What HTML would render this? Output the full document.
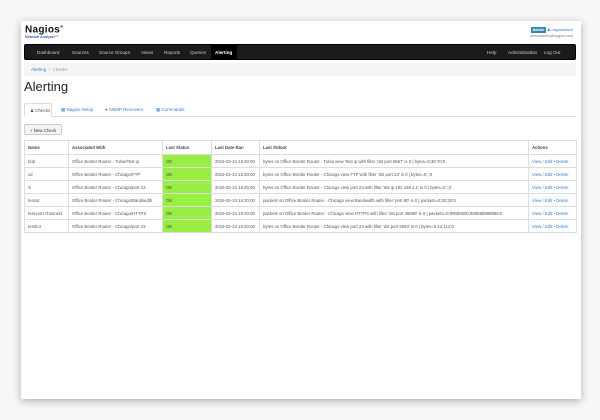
<!DOCTYPE html>
<html><head><meta charset="utf-8"><style>
*{margin:0;padding:0;box-sizing:border-box}
body{width:600px;height:420px;background:#f7f7f7;font-family:"Liberation Sans",sans-serif;position:relative;overflow:hidden;color:#333}
.frame{position:absolute;left:21px;top:21px;width:560px;height:378px;background:#fff;box-shadow:0 2px 8px rgba(0,0,0,.3)}
.abs{position:absolute;white-space:nowrap}
.nav{left:3px;top:23px;width:552px;height:16px;background:#1b1b1b;border:1px solid #000;border-radius:2px;font-size:4.6px;color:#ccc}
.nav span{position:absolute;top:5px;white-space:nowrap}
.bc{left:3px;top:42px;width:552px;height:13px;background:#f5f5f5;font-size:4.5px;color:#999;padding:4px 0 0 7px}
.bc a{color:#3a7dc9}
h1{position:absolute;left:3px;top:58px;font-size:13px;font-weight:normal;color:#222}
.tabline{left:3px;top:95px;width:552px;height:1px;background:#ddd}
.tab{position:absolute;top:82px;font-size:4.5px;color:#3a7dc9;white-space:nowrap}
.tab.act{left:3px;width:28px;height:14px;border:1px solid #ddd;border-bottom:1px solid #fff;border-radius:2px 2px 0 0;background:#fff;color:#555;padding:4px 0 0 5px}
.btn{left:3px;top:103px;width:38px;height:11px;border:1px solid #ccc;border-radius:2px;background:#f4f4f4;font-size:4.4px;color:#333;padding:3px 0 0 5px}
table{position:absolute;left:3px;top:119px;width:552px;border-collapse:collapse;font-size:4.3px;color:#555;table-layout:fixed}
td,th{border:1px solid #ddd;height:13px;padding:0 3px;text-align:left;white-space:nowrap;overflow:hidden}
th{font-weight:bold;color:#444;height:14px}
td.ok{background:#99ee44;color:#444}
td.ac{color:#3a7dc9}
</style></head><body>
<div class="frame">
  <div class="abs" style="left:4px;top:3px;font-size:10px;font-weight:bold;color:#111;letter-spacing:.3px">Nagios<sup style="font-size:4px">®</sup></div>
  <div class="abs" style="left:4px;top:14px;font-size:3.6px;color:#2a5db0;font-weight:bold">Network Analyzer™</div>
  <div class="abs" style="right:8px;top:6px;font-size:3.8px;color:#3a7dc9;line-height:6px"><span style="display:inline-block;width:15px;height:6px;background:#3a87ad;color:#fff;font-weight:bold;text-align:center">Admin</span> &#9823; nagiosadmin</div>
  <div class="abs" style="right:8px;top:13px;font-size:3.8px;color:#777">demoadmin@nagios.com</div>
  <div class="abs nav">
    <span style="left:12px">Dashboard</span><span style="left:47px">Sources</span><span style="left:74px">Source Groups</span><span style="left:116px">Views</span><span style="left:139px">Reports</span><span style="left:165px">Queries</span>
    <span style="left:186px;top:0;height:14px;width:26px;background:#000;color:#fff;font-weight:bold;padding:5px 0 0 4px">Alerting</span>
    <span style="left:462px">Help</span><span style="left:483px">Administration</span><span style="left:519px">Log Out</span>
  </div>
  <div class="abs bc"><a>Alerting</a> &nbsp;/&nbsp; Checks</div>
  <h1>Alerting</h1>
  <div class="abs tabline"></div>
  <div class="tab act">&#9823; Checks</div>
  <div class="tab" style="left:40px;top:86px">&#9641; Nagios Setup</div>
  <div class="tab" style="left:84px;top:86px">&#9679; SNMP Receivers</div>
  <div class="tab" style="left:135px;top:86px">&#9638; Commands</div>
  <div class="abs btn">+ New Check</div>
  <table>
    <colgroup><col style="width:44px"><col style="width:94px"><col style="width:49px"><col style="width:48px"><col style="width:269px"><col style="width:48px"></colgroup>
    <tr><th>Name</th><th>Associated With</th><th>Last Status</th><th>Last Date Ran</th><th>Last Stdout</th><th>Actions</th></tr>
    <tr><td>bob</td><td>Office Border Router - Tulsa/Test ip</td><td class="ok">OK</td><td>2016-02-24 16:20:00</td><td>bytes on Office Border Router - Tulsa view Test ip with filter 'dst port 5667' is 0 | bytes=0;30;70;0</td><td class="ac">View / Edit • Delete</td></tr>
    <tr><td>cd</td><td>Office Border Router - Chicago/FTP</td><td class="ok">OK</td><td>2016-02-24 16:20:00</td><td>bytes on Office Border Router - Chicago view FTP with filter 'dst port 23' is 0 | bytes=0;;;0</td><td class="ac">View / Edit • Delete</td></tr>
    <tr><td>S</td><td>Office Border Router - Chicago/port 23</td><td class="ok">OK</td><td>2016-02-24 16:20:00</td><td>bytes on Office Border Router - Chicago view port 23 with filter 'dst ip 192.168.1.1' is 0 | bytes=0;;;0</td><td class="ac">View / Edit • Delete</td></tr>
    <tr><td>tessst</td><td>Office Border Router - Chicago/Bandwidth</td><td class="ok">OK</td><td>2016-02-24 16:20:00</td><td>packets on Office Border Router - Chicago view Bandwidth with filter 'port 80' is 0 | packets=0;20;30;0</td><td class="ac">View / Edit • Delete</td></tr>
    <tr><td>test-port channel1</td><td>Office Border Router - Chicago/HTTPS</td><td class="ok">OK</td><td>2016-02-24 16:20:00</td><td>packets on Office Border Router - Chicago view HTTPS with filter 'dst port 45698' is 0 | packets=0;99000000;888888888888;0</td><td class="ac">View / Edit • Delete</td></tr>
    <tr><td>test2ur</td><td>Office Border Router - Chicago/port 23</td><td class="ok">OK</td><td>2016-02-24 16:20:00</td><td>bytes on Office Border Router - Chicago view port 23 with filter 'dst port 5693' is 0 | bytes=0;12;112;0</td><td class="ac">View / Edit • Delete</td></tr>
  </table>
</div>
</body></html>
